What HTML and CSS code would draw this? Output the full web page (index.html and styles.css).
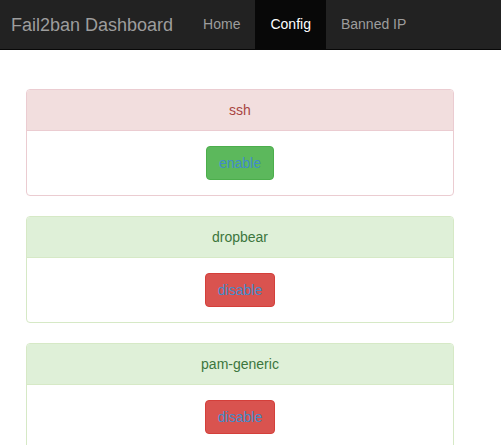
FILE: index.html
```html
<!DOCTYPE html>
<html>
<head>
<meta charset="utf-8">
<title>Fail2ban Dashboard</title>
<link rel="stylesheet" href="styles.css">
</head>
<body>
<nav class="navbar">
  <a class="brand" href="#">Fail2ban Dashboard</a>
  <ul class="nav">
    <li><a href="#">Home</a></li>
    <li class="active"><a href="#">Config</a></li>
    <li><a href="#">Banned IP</a></li>
  </ul>
</nav>
<main class="content">
  <section class="panel panel-danger">
    <div class="panel-heading">ssh</div>
    <div class="panel-body"><a class="btn btn-success" href="#">enable</a></div>
  </section>
  <section class="panel panel-success">
    <div class="panel-heading">dropbear</div>
    <div class="panel-body"><a class="btn btn-danger" href="#">disable</a></div>
  </section>
  <section class="panel panel-success">
    <div class="panel-heading">pam-generic</div>
    <div class="panel-body"><a class="btn btn-danger" href="#">disable</a></div>
  </section>
</main>
</body>
</html>
```

FILE: styles.css
```css
* { box-sizing: border-box; }
html, body { margin: 0; padding: 0; }
body {
  font-family: "Liberation Sans", Arial, sans-serif;
  font-size: 14px;
  line-height: 20px;
  color: #333;
  background: #fff;
  overflow: hidden;
}
a { text-decoration: none; }
.navbar {
  display: flex;
  align-items: stretch;
  height: 50px;
  background: #222;
  border-bottom: 1px solid #080808;
}
.brand {
  display: block;
  flex-shrink: 0;
  white-space: nowrap;
  padding: 15px 15px 15px 11px;
  font-size: 18px;
  line-height: 20px;
  color: #9d9d9d;
}
.nav {
  display: flex;
  list-style: none;
  margin: 0;
  padding: 0;
}
.nav li a {
  display: block;
  white-space: nowrap;
  padding: 15px 15px;
  line-height: 19px;
  color: #9d9d9d;
}
.nav li.active a {
  background: #080808;
  color: #fff;
}
.content {
  padding: 39px 0 0 26px;
}
.panel {
  width: 428px;
  margin-bottom: 20px;
  border: 1px solid #ddd;
  border-radius: 4px;
  background: #fff;
  text-align: center;
}
.panel-heading {
  padding: 10px 15px;
  border-bottom: 1px solid transparent;
  border-radius: 3px 3px 0 0;
}
.panel-body {
  padding: 15px;
}
.panel-danger { border-color: #ebccd1; }
.panel-danger .panel-heading {
  background: #f2dede;
  color: #a94442;
  border-color: #ebccd1;
}
.panel-success { border-color: #d6e9c6; }
.panel-success .panel-heading {
  background: #dff0d8;
  color: #3c763d;
  border-color: #d6e9c6;
}
.btn {
  display: inline-block;
  padding: 6px 12px;
  font-size: 14px;
  line-height: 20px;
  border: 1px solid transparent;
  border-radius: 4px;
  color: #428bca;
}
.btn-success { background: #5cb85c; border-color: #4cae4c; }
.btn-danger { background: #d9534f; border-color: #d43f3a; }
```
